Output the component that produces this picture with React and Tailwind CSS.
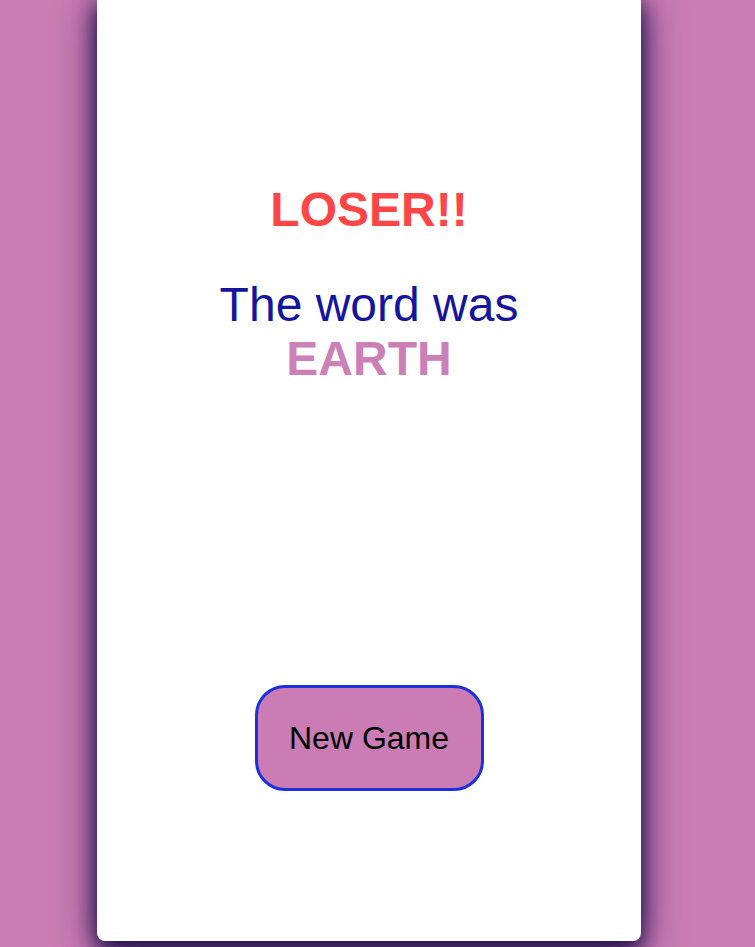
import React from 'react';

const App = () => {
    return (
        <div className="min-h-[947px] w-full bg-[#cb7cb4] overflow-hidden" style={{ fontFamily: '"Liberation Sans", Arial, sans-serif' }}>
            {/* Card */}
            <div className="ml-[97px] -mt-[6px] w-[544px] h-[947px] bg-white rounded-lg shadow-[0_10px_22px_rgba(30,15,75,1),0_8px_40px_rgba(30,15,75,0.7)] flex flex-col items-center pt-[188px]">
                <h1 className="text-[48px] leading-[55px] font-bold text-[#ff4646]">LOSER!!</h1>
                <p className="mt-[41px] text-[48px] leading-[54px] text-center text-[#14149e]">
                    The word was
                    <br />
                    <span className="font-bold text-[#cc80b8]">EARTH</span>
                </p>
                <button className="mt-[299px] w-[229px] h-[106px] rounded-[30px] border-[3px] border-[#1c30dc] bg-[#cb7cb4] text-[32px] text-black">
                    New Game
                </button>
            </div>
        </div>
    );
};

export default App;
